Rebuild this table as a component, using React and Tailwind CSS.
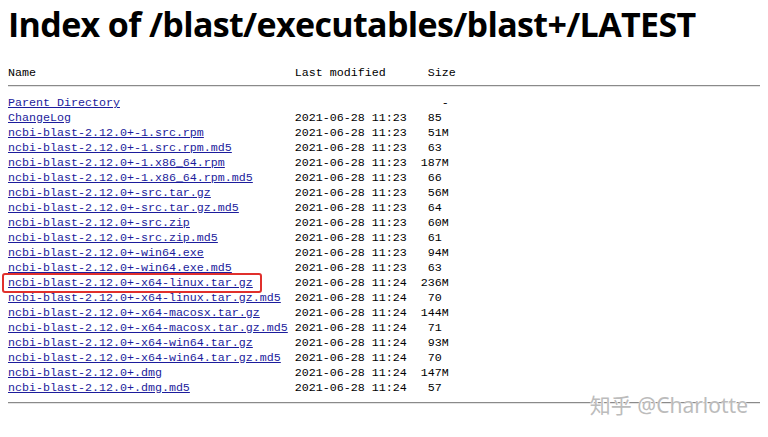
import React from 'react';

const files = [
  ['ChangeLog', '11:23', ' 85 '],
  ['ncbi-blast-2.12.0+-1.src.rpm', '11:23', ' 51M'],
  ['ncbi-blast-2.12.0+-1.src.rpm.md5', '11:23', ' 63 '],
  ['ncbi-blast-2.12.0+-1.x86_64.rpm', '11:23', '187M'],
  ['ncbi-blast-2.12.0+-1.x86_64.rpm.md5', '11:23', ' 66 '],
  ['ncbi-blast-2.12.0+-src.tar.gz', '11:23', ' 56M'],
  ['ncbi-blast-2.12.0+-src.tar.gz.md5', '11:23', ' 64 '],
  ['ncbi-blast-2.12.0+-src.zip', '11:23', ' 60M'],
  ['ncbi-blast-2.12.0+-src.zip.md5', '11:23', ' 61 '],
  ['ncbi-blast-2.12.0+-win64.exe', '11:23', ' 94M'],
  ['ncbi-blast-2.12.0+-win64.exe.md5', '11:23', ' 63 '],
  ['ncbi-blast-2.12.0+-x64-linux.tar.gz', '11:24', '236M', true],
  ['ncbi-blast-2.12.0+-x64-linux.tar.gz.md5', '11:24', ' 70 '],
  ['ncbi-blast-2.12.0+-x64-macosx.tar.gz', '11:24', '144M'],
  ['ncbi-blast-2.12.0+-x64-macosx.tar.gz.md5', '11:24', ' 71 '],
  ['ncbi-blast-2.12.0+-x64-win64.tar.gz', '11:24', ' 93M'],
  ['ncbi-blast-2.12.0+-x64-win64.tar.gz.md5', '11:24', ' 70 '],
  ['ncbi-blast-2.12.0+.dmg', '11:24', '147M'],
  ['ncbi-blast-2.12.0+.dmg.md5', '11:24', ' 57 '],
];

const pad = (s, n) => ' '.repeat(Math.max(1, n - s.length));

function App() {
  return (
    <div className="relative min-h-[437px] bg-white px-2 text-black">
      <h1 className="pt-[4px] text-[34px] font-bold leading-[40px] tracking-[-0.65px] [font-family:'Open_Sans',Arial,sans-serif]">
        Index of /blast/executables/blast+/LATEST
      </h1>

      {/* listing, like apache's <pre> */}
      <div className="mt-[22px] whitespace-pre text-[11.67px] leading-[15px] [font-family:'Liberation_Mono','Courier_New',monospace]">
        <div>{'Name' + pad('Name', 41) + 'Last modified      Size'}</div>
        <div className="flex h-[15px] items-start pt-[4px]">
          <div className="w-full border-t border-b border-t-[#8a8a8a] border-b-[#e4e4e4]" />
        </div>
        <div>
          <a href="#" className="text-[#1c1c9c] underline">Parent Directory</a>
          {pad('Parent Directory', 62) + '-'}
        </div>
        {files.map(([name, time, size, marked]) => (
          <div key={name}>
            <span className="relative">
              <a href="#" className="text-[#1c1c9c] underline">{name}</a>
              {marked && (
                <span className="absolute -top-[3px] -bottom-[3px] -left-[6px] -right-[9px] rounded-[3px] border-[2.5px] border-[#e0302c]" />
              )}
            </span>
            {pad(name, 41) + '2021-06-28 ' + time + '  ' + size}
          </div>
        ))}
        <div className="flex h-[15px] items-start pt-[6px]">
          <div className="w-full border-t border-b border-t-[#8a8a8a] border-b-[#e4e4e4]" />
        </div>
      </div>

      {/* zhihu watermark */}
      <div className="absolute right-[20px] top-[391px] text-[21px] leading-[28px] text-[#bcbcbc] [font-family:'Noto_Sans','Noto_Sans_CJK_SC',sans-serif] [text-shadow:0_0_1px_#fff,1px_1px_0_#fff]">
        知乎 @Charlotte
      </div>
    </div>
  );
}

export default App;
